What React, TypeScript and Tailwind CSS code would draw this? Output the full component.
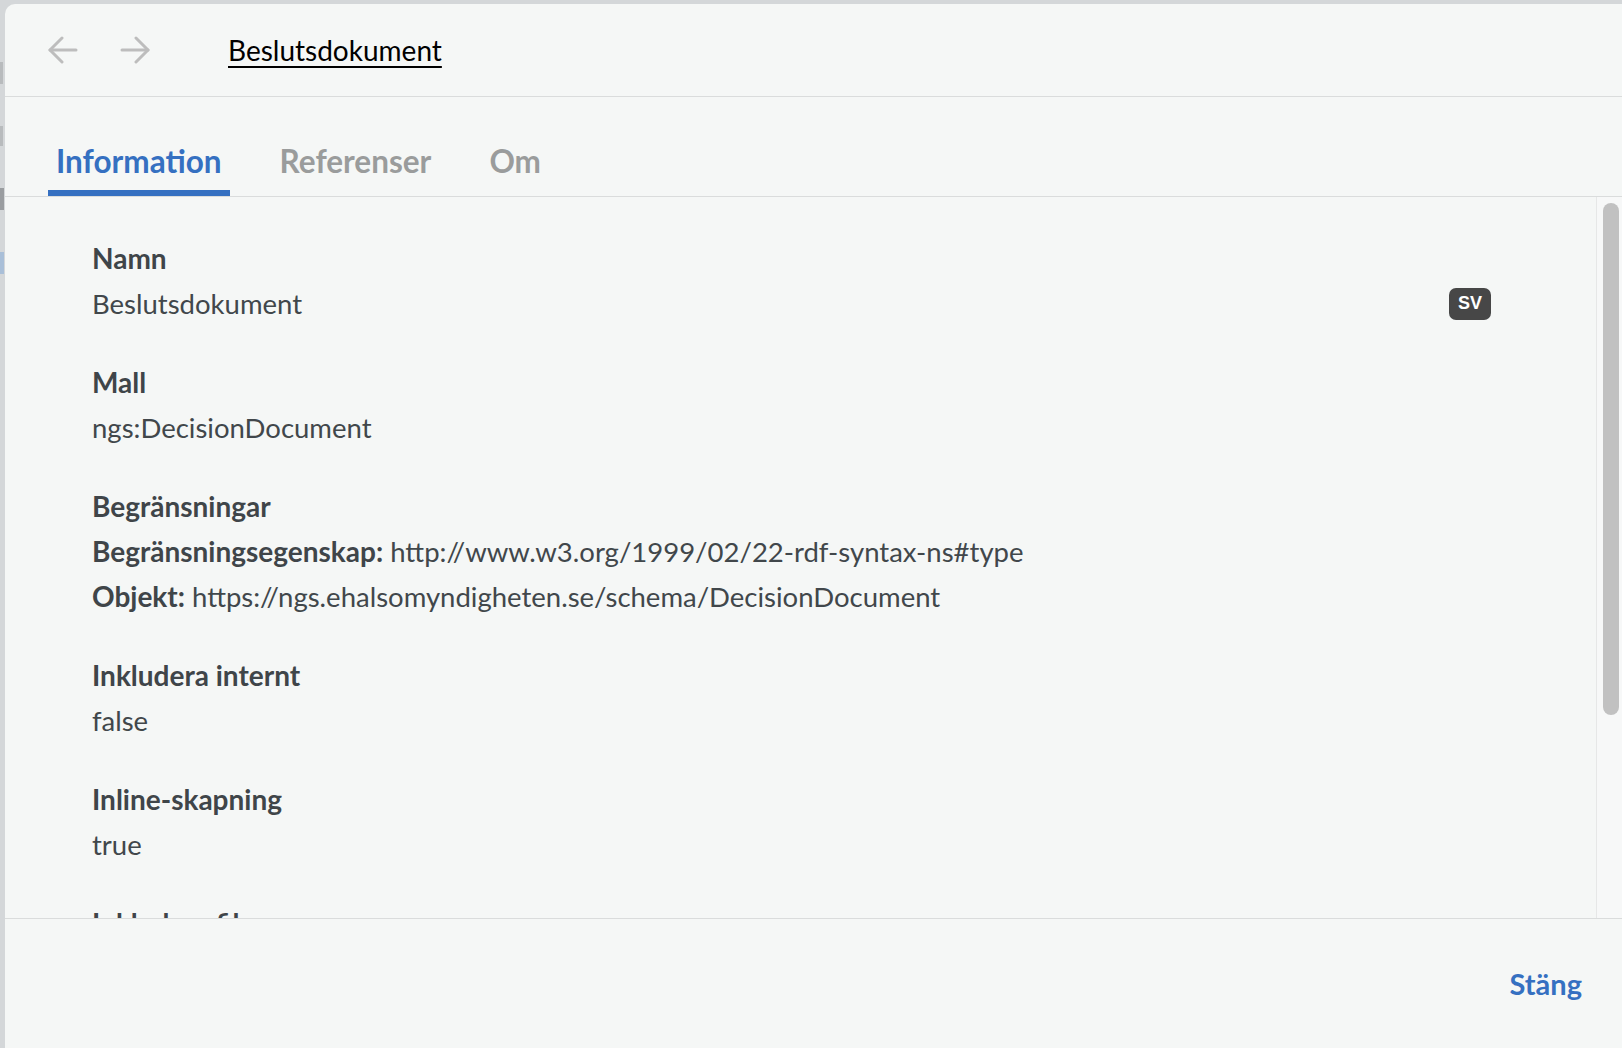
import React from "react";

const font = { fontFamily: "Lato, 'Noto Sans', sans-serif" };

function Arrow({ dir }: { dir: "left" | "right" }) {
  return (
    <svg width="30" height="30" viewBox="0 0 30 30" fill="none" stroke="#bdbdbd" strokeWidth="3" strokeLinecap="round" strokeLinejoin="round">
      {dir === "left" ? (
        <>
          <path d="M28 15H2" />
          <path d="M14 3L2 15l12 12" />
        </>
      ) : (
        <>
          <path d="M2 15h26" />
          <path d="M16 3l12 12-12 12" />
        </>
      )}
    </svg>
  );
}

function Field({ label, children, badge }: { label: string; children: React.ReactNode; badge?: boolean }) {
  return (
    <div className="mb-[34px]">
      <div className="font-bold text-[#3f4549] text-[28px] leading-[45px]">{label}</div>
      <div className="flex items-center justify-between text-[#41474b] text-[27.5px] leading-[45px]">
        <div>{children}</div>
        {badge && (
          <div
            className="w-[42px] h-[32px] rounded-[7px] bg-[#474747] text-white text-[18px] font-bold flex items-center justify-center"
            style={{ fontFamily: "'Liberation Sans', Arial, sans-serif" }}
          >
            SV
          </div>
        )}
      </div>
    </div>
  );
}

export default function App() {
  return (
    <div className="w-[1622px] h-[1048px] bg-[#d4d7d9] flex overflow-hidden" style={font}>
      <div className="w-[5px] shrink-0 flex flex-col">
        <div className="h-[62px]" />
        <div className="h-[22px] w-[3px] bg-[#b8bbbd]" />
        <div className="h-[42px]" />
        <div className="h-[20px] w-[3px] bg-[#b8bbbd]" />
        <div className="h-[42px]" />
        <div className="h-[22px] w-[4px] bg-[#9a9da0]" />
        <div className="h-[42px]" />
        <div className="h-[22px] w-[4px] bg-[#a9bfd8]" />
      </div>
      <div className="flex-1 mt-[4px] rounded-tl-[10px] bg-[#f5f7f6] flex flex-col min-w-0">
        <div className="h-[93px] shrink-0 border-b border-[#dadcdc] flex items-center pl-[43px]">
          <div className="flex items-center gap-[42px]">
            <Arrow dir="left" />
            <Arrow dir="right" />
          </div>
          <div className="ml-[78px] text-black text-[28px] underline decoration-[1.5px] underline-offset-[5px]">
            Beslutsdokument
          </div>
        </div>
        <div className="h-[100px] shrink-0 border-b border-[#dadcdc] flex items-end pl-[43px] gap-[42px]">
          <div className="px-[8px] pb-[9px] border-b-[6px] border-[#3570c1] text-[#3570c1] text-[31.5px] font-bold leading-[40px]">
            Information
          </div>
          <div className="px-[8px] pb-[9px] border-b-[6px] border-transparent text-[#9a9c9c] text-[31.5px] font-bold leading-[40px]">
            Referenser
          </div>
          <div className="px-[8px] pb-[9px] border-b-[6px] border-transparent text-[#9a9c9c] text-[31.5px] font-bold leading-[40px]">
            Om
          </div>
        </div>
        <div className="flex-1 flex min-h-0">
          <div className="flex-1 overflow-hidden pl-[87px] pr-[105px] pt-[39px]">
            <Field label="Namn" badge>Beslutsdokument</Field>
            <Field label="Mall">ngs:DecisionDocument</Field>
            <div className="mb-[34px] leading-[45px]">
              <div className="font-bold text-[#3f4549] text-[28px]">Begränsningar</div>
              <div className="text-[#41474b] text-[27.5px]">
                <span className="font-bold text-[#3f4549] text-[28px]">Begränsningsegenskap:</span> http://www.w3.org/1999/02/22-rdf-syntax-ns#type
              </div>
              <div className="text-[#41474b] text-[27.5px]">
                <span className="font-bold text-[#3f4549] text-[28px]">Objekt:</span> https://ngs.ehalsomyndigheten.se/schema/DecisionDocument
              </div>
            </div>
            <Field label="Inkludera internt">false</Field>
            <Field label="Inline-skapning">true</Field>
            <Field label="Inkludera fil">false</Field>
          </div>
          <div className="w-[26px] shrink-0 border-l border-[#e6e7e7] bg-[#f7f8f8] pl-[6px] pr-[3px] pt-[6px]">
            <div className="h-[512px] rounded-full bg-[#c1c1c1]" />
          </div>
        </div>
        <div className="h-[130px] shrink-0 border-t border-[#dadcdc] flex items-center justify-end pr-[40px]">
          <div className="text-[#3570c1] text-[29px] font-bold">Stäng</div>
        </div>
      </div>
    </div>
  );
}
